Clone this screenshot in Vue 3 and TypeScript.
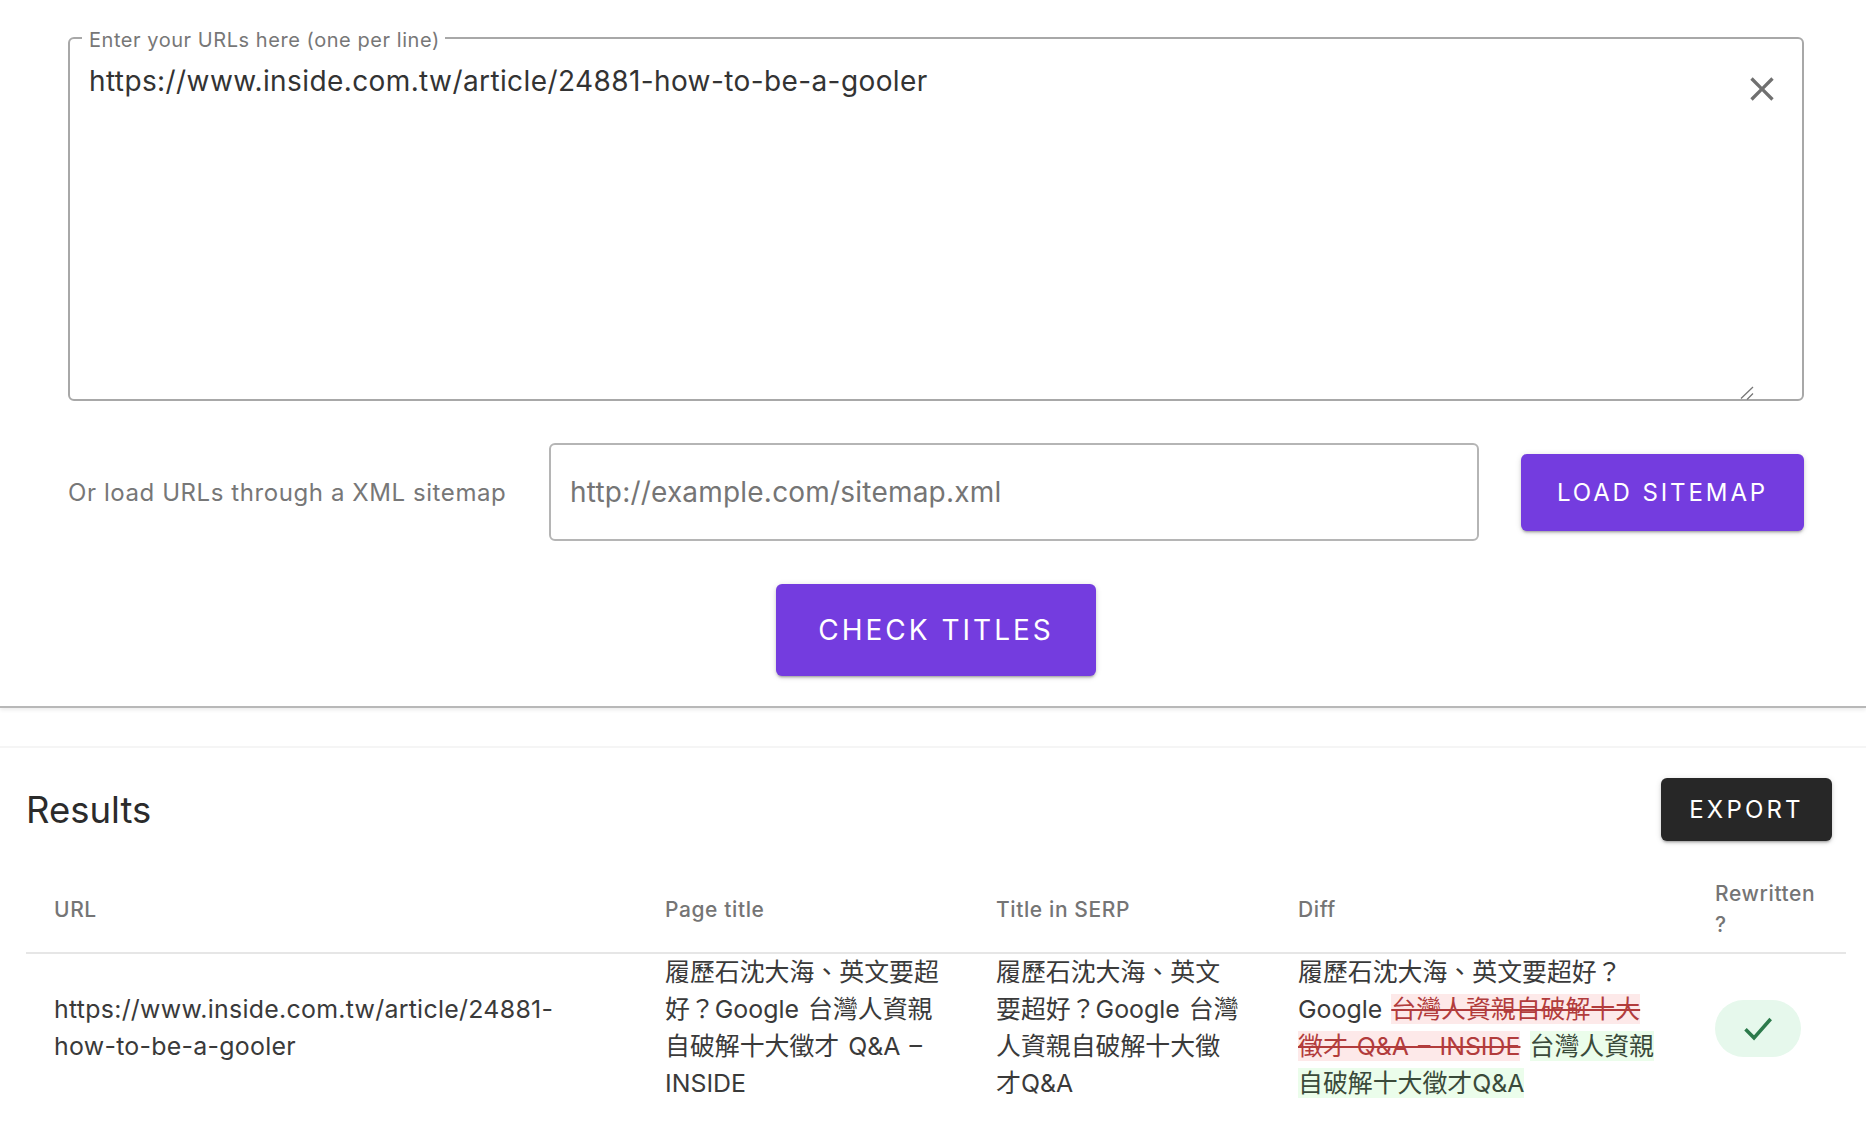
<script setup lang="ts">
const url = 'https://www.inside.com.tw/article/24881-how-to-be-a-gooler'
</script>

<template>
  <div class="page">
    <section class="form">
      <div class="urls">
        <span class="urls-label">Enter your URLs here (one per line)</span>
        <textarea class="urls-input" :value="url" spellcheck="false"></textarea>
        <svg class="clear" viewBox="0 0 24 24" width="40" height="40" aria-hidden="true">
          <path d="M19 6.41 17.59 5 12 10.59 6.41 5 5 6.41 10.59 12 5 17.59 6.41 19 12 13.41 17.59 19 19 17.59 13.41 12z" />
        </svg>
        <svg class="grip" viewBox="0 0 14 14" width="14" height="14" aria-hidden="true">
          <path d="M1 12.5 13 1M7 13.5 13 7.5" fill="none" stroke="#777" stroke-width="1.3" />
        </svg>
      </div>
      <div class="sitemap">
        <span class="sitemap-label">Or load URLs through a XML sitemap</span>
        <input class="sitemap-input" type="text" placeholder="http://example.com/sitemap.xml" />
        <button class="btn btn-load" type="button">LOAD SITEMAP</button>
      </div>
      <div class="check-row">
        <button class="btn btn-check" type="button">CHECK TITLES</button>
      </div>
    </section>

    <div class="spacer"></div>

    <section class="results">
      <div class="results-head">
        <h2>Results</h2>
        <button class="btn btn-export" type="button">EXPORT</button>
      </div>
      <table>
        <colgroup>
          <col class="c-url" /><col class="c-title" /><col class="c-serp" /><col class="c-diff" /><col class="c-re" />
        </colgroup>
        <thead>
          <tr>
            <th>URL</th>
            <th>Page title</th>
            <th>Title in SERP</th>
            <th>Diff</th>
            <th>Rewritten ?</th>
          </tr>
        </thead>
        <tbody>
          <tr>
            <td class="url-cell">{{ url }}</td>
            <td>履歷石沈大海、英文要超好？Google 台灣人資親自破解十大徵才 Q&amp;A – INSIDE</td>
            <td>履歷石沈大海、英文要超好？Google 台灣人資親自破解十大徵才Q&amp;A</td>
            <td>履歷石沈大海、英文要超好？Google <del>台灣人資親自破解十大徵才 Q&amp;A – INSIDE</del> <ins>台灣人資親自破解十大徵才Q&amp;A</ins></td>
            <td>
              <span class="chip">
                <svg viewBox="0 0 24 24" width="40" height="40" aria-hidden="true">
                  <path d="M4.5 12.8 9.6 17.9 19.6 6.6" fill="none" stroke="#2c7a4b" stroke-width="2.1" />
                </svg>
              </span>
            </td>
          </tr>
        </tbody>
      </table>
    </section>
  </div>
</template>

<style scoped>
.page {
  width: 1866px;
  min-height: 1144px;
  background: #fff;
  font-family: Inter, "Noto Sans CJK TC", sans-serif;
  color: #333;
}
.form {
  padding: 37px 62px 30px 68px;
  border-bottom: 2px solid #b8b8b8;
  box-shadow: 0 2px 4px rgba(0, 0, 0, 0.08);
}
.urls {
  position: relative;
  height: 364px;
  box-sizing: border-box;
  border: 2px solid #a8a8a8;
  border-radius: 6px;
  padding: 24px 48px 0 19px;
  display: flex;
}
.urls-label {
  position: absolute;
  left: 12px;
  top: -11px;
  padding: 0 5px 0 7px;
  background: #fff;
  font-size: 20px;
  line-height: 24px;
  letter-spacing: 0.55px;
  color: #777;
}
.urls-input {
  flex: 1;
  height: 100%;
  box-sizing: border-box;
  border: 0;
  outline: 0;
  padding: 0;
  margin: 0;
  background: transparent;
  font: inherit;
  font-size: 28px;
  line-height: 37px;
  letter-spacing: 0.4px;
  color: #333;
  resize: none;
}
.clear {
  position: absolute;
  right: 20px;
  top: 30px;
  fill: #707070;
}
.grip {
  position: absolute;
  right: 48px;
  bottom: -1px;
}
.sitemap {
  display: flex;
  align-items: center;
  margin-top: 42px;
}
.sitemap-label {
  width: 481px;
  flex: none;
  font-size: 24px;
  letter-spacing: 0.58px;
  color: #777;
}
.sitemap-input {
  flex: 1;
  min-width: 0;
  height: 98px;
  box-sizing: border-box;
  border: 2px solid #b5b5b5;
  border-radius: 6px;
  padding: 0 19px;
  outline: 0;
  font: inherit;
  font-size: 28px;
  letter-spacing: 0.2px;
  color: #333;
}
.sitemap-input::placeholder {
  color: #757575;
  opacity: 1;
}
.btn {
  border: 0;
  border-radius: 6px;
  color: #fff;
  font-family: Inter, sans-serif;
  font-weight: 400;
  background: #743cdf;
  box-shadow: 0 3px 2px -2px rgba(0, 0, 0, 0.2), 0 2px 3px rgba(0, 0, 0, 0.14), 0 1px 6px rgba(0, 0, 0, 0.12);
  padding: 0;
}
.btn-load {
  flex: none;
  width: 283px;
  height: 77px;
  margin-left: 42px;
  font-size: 24px;
  letter-spacing: 2.9px;
}
.check-row {
  display: flex;
  justify-content: center;
  margin-top: 43px;
}
.btn-check {
  width: 320px;
  height: 92px;
  font-size: 28px;
  letter-spacing: 3px;
}
.spacer {
  height: 38px;
  border-bottom: 2px solid #f5f5f5;
}
.results {
  padding: 30px 20px 0 26px;
}
.results-head {
  display: flex;
  align-items: center;
  justify-content: space-between;
  padding-right: 14px;
  height: 63px;
}
h2 {
  margin: 0;
  font-size: 36.5px;
  font-weight: 400;
  color: #2b2b2b;
}
.btn-export {
  width: 171px;
  height: 63px;
  background: #272727;
  font-size: 24px;
  letter-spacing: 3.2px;
}
table {
  width: 1820px;
  margin-top: 25px;
  table-layout: fixed;
  border-collapse: collapse;
}
.c-url { width: 611px; }
.c-title { width: 331px; }
.c-serp { width: 302px; }
.c-diff { width: 417px; }
.c-re { width: 159px; }
th {
  text-align: left;
  padding: 12px 28px;
  font-size: 21px;
  line-height: 31px;
  font-weight: 500;
  letter-spacing: 0.6px;
  color: #757575;
  border-bottom: 2px solid #e6e6e6;
}
td {
  padding: 0 28px;
  font-size: 24.9px;
  line-height: 37px;
  word-spacing: 2px;
  color: #3a3a3a;
  vertical-align: middle;
}
.url-cell {
  letter-spacing: 0.28px;
}
del {
  background: #fde9e9;
  color: #b23c3c;
}
ins {
  background: #ebfdeb;
  color: #3a4a3a;
  text-decoration: none;
}
.chip {
  display: flex;
  align-items: center;
  justify-content: center;
  width: 86px;
  height: 57px;
  border-radius: 29px;
  background: #e6f8ec;
}
</style>

<style>
body { margin: 0; background: #fff; }
</style>
